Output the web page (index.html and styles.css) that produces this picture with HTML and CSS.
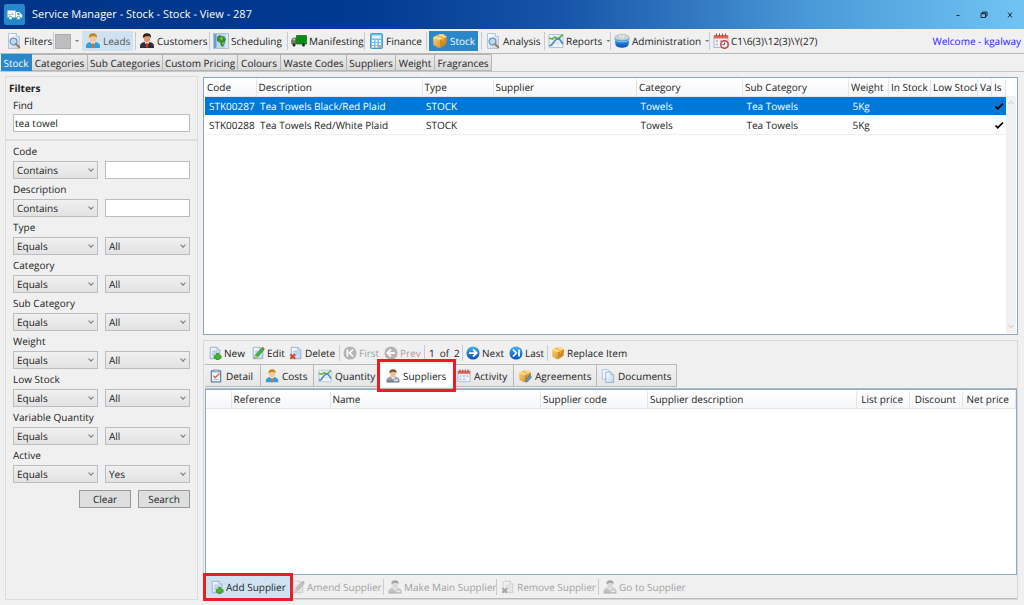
FILE: index.html
```
<!DOCTYPE html>
<html lang="en">
<head>
<meta charset="utf-8">
<title>Service Manager - Stock - Stock - View - 287</title>
<link rel="stylesheet" href="styles.css">
</head>
<body>
<svg class="sprite" aria-hidden="true">
  <defs>
    <linearGradient id="g-paper" x1="0" y1="0" x2="1" y2="1"><stop offset="0" stop-color="#fff"/><stop offset="1" stop-color="#bcd3ee"/></linearGradient>
    <linearGradient id="g-gold" x1="0" y1="0" x2="1" y2="1"><stop offset="0" stop-color="#ffdf86"/><stop offset="1" stop-color="#c97f18"/></linearGradient>
    <linearGradient id="g-blue" x1="0" y1="0" x2="0" y2="1"><stop offset="0" stop-color="#3fb2f5"/><stop offset="1" stop-color="#0a50b8"/></linearGradient>
    <linearGradient id="g-steel" x1="0" y1="0" x2="0" y2="1"><stop offset="0" stop-color="#b4b9c6"/><stop offset="1" stop-color="#70788b"/></linearGradient>
    <symbol id="i-paper" viewBox="0 0 16 16"><path d="M2.500 1.500h8l3 3v10h-11z" fill="url(#g-paper)" stroke="#93a9c9"/><path d="M10.500 1.500v3h3" fill="#fff" stroke="#93a9c9"/><path d="M4.500 6h6M4.500 8h7M4.500 10h5" stroke="#a7bdd9"/></symbol>
    <symbol id="i-search" viewBox="0 0 16 16"><path d="M2.500.5h8l3 3v12h-11z" fill="url(#g-paper)" stroke="#b7c4d8"/><path d="M10.500.5v3h3" fill="#fff" stroke="#b7c4d8"/><circle cx="7.500" cy="8.500" r="3.400" fill="#b5dcf7" stroke="#7694b7" stroke-width="1.300"/><path d="M10 11l3.300 3.300" stroke="#a47b62" stroke-width="2" stroke-linecap="round"/></symbol>
    <symbol id="i-add" viewBox="0 0 16 16"><use href="#i-paper"/><path d="M9.500 8.500h3v2.500h2.500v3h-2.500v2h-3v-2H7v-3h2.500z" fill="#3fbe22" stroke="#23800f" stroke-width=".7"/></symbol>
    <symbol id="i-edit" viewBox="0 0 16 16"><use href="#i-paper"/><path d="M5 10.500L12.500 2l2.500 2-7.500 8.500L4 14z" fill="#47b83a" stroke="#287d27" stroke-width=".8"/><path d="M12.500 2l1-1 2 1.700-.8 1.300z" fill="#dc4938"/><path d="M5 10.500l2.500 2L4 14z" fill="#f2ca8a"/></symbol>
    <symbol id="i-delete" viewBox="0 0 16 16"><use href="#i-paper"/><path d="M1.500 9.500l5.500 5M7 9.500l-5.500 5" stroke="#df4027" stroke-width="2.300"/></symbol>
    <symbol id="i-lead" viewBox="0 0 16 16"><path d="M1 15v-2.200c0-2 2-3.300 4.300-3.800h5.400c2.300.5 4.300 1.800 4.300 3.800V15z" fill="#319fdf"/><path d="M5.500 9l2.500 3.300L10.500 9z" fill="#fff"/><path d="M7.300 10h1.400l.7 4L8 15.500 6.600 14z" fill="#e36a20"/><ellipse cx="8" cy="5.500" rx="3.300" ry="4" fill="#f6c693"/><path d="M4 5C3.700 1.700 5.500.3 8.200.3 11 .3 12.300 2 12 5L10.500 3.500 7 3.300 5 4.200z" fill="#c8851d"/></symbol>
    <symbol id="i-customer" viewBox="0 0 16 16"><path d="M1 15v-2.200c0-2 2-3.300 4.300-3.800h5.400c2.300.5 4.300 1.800 4.300 3.800V15z" fill="#2c3138"/><path d="M5.500 9L8 13l2.500-4z" fill="#fff"/><path d="M7.300 10h1.400l.6 3.500L8 15l-1.300-1.500z" fill="#d9302a"/><ellipse cx="8" cy="5.500" rx="3.200" ry="4" fill="#d99a76"/><path d="M4 5C3.500 1.700 5.300.3 8.200.3 11 .3 12.500 2 12 5L10.500 3.300 7 3.200 5 4.200z" fill="#33221d"/></symbol>
    <symbol id="i-supplier" viewBox="0 0 16 16"><path d="M1 15v-2.200c0-2 2-3.300 4.300-3.800h5.400c2.300.5 4.300 1.800 4.300 3.800V15z" fill="url(#g-steel)" stroke="#626b7a" stroke-width=".6"/><path d="M5.500 9L8 12l2.500-3z" fill="#e9edf4"/><path d="M9 12h5v2H9z" fill="#dce4ed"/><ellipse cx="8" cy="5.500" rx="3.200" ry="4" fill="#edbd96"/><path d="M4 5C3.500 1.700 5.300.3 8.200.3 11 .3 12.500 2 12 5L10.500 3.300 7 3.200 5 4.200z" fill="#795134"/></symbol>
    <symbol id="i-map" viewBox="0 0 16 16"><rect x=".5" y=".5" width="15" height="15" fill="#b9d8f3" stroke="#adc0d6"/><path d="M1 1h2.500v14H1z" fill="#679ed7"/><path d="M12.500 1h2.500v14h-2.500z" fill="#d9e9f8"/><path d="M4 4l2.500-2 2 1 3 .5 1.500 3-1 2.500-.6 2-1.400 3-2-1-1-3.500L4 8z" fill="#3e8f2e"/><path d="M8 4l2 1-1 2-2-1zM10 9l1 1-1 2-1-1z" fill="#a3c63d"/></symbol>
    <symbol id="i-truck" viewBox="0 0 16 16"><path d="M5.500 2.500h10v8.500h-10z" fill="#068d13" stroke="#056b0e" stroke-width=".7"/><path d="M.7 11V7.300L2 5h3v6z" fill="#5e8c54" stroke="#444" stroke-width=".6"/><path d="M1.500 7.300L2.500 5.600h1.700v1.700z" fill="#e9b6a9"/><circle cx="3" cy="12" r="1.500" fill="#262626"/><circle cx="12.500" cy="12" r="1.500" fill="#262626"/></symbol>
    <symbol id="i-calc" viewBox="0 0 16 16"><rect x="2.500" y=".5" width="12" height="15" rx="1" fill="#72bdeb" stroke="#459bd3"/><path d="M4 2.500h9v3H4z" fill="#dff5ff"/><path d="M4 7h2v2H4zM7.500 7h2v2h-2zM11 7h2v2h-2zM4 10h2v2H4zM7.500 10h2v2h-2zM11 10h2v2h-2zM4 13h2v1.500H4zM7.500 13h2v1.500h-2z" fill="#fff"/><path d="M11 13h2v1.500h-2z" fill="#e9a92e"/></symbol>
    <symbol id="i-box" viewBox="0 0 16 16"><path d="M1 4.500L7 1.500 11 1l4 3-1 7-6 4-2.500-.5L1.500 12z" fill="url(#g-gold)"/><path d="M1 4.500l6.500 2.500L15 4 11 1 7 1.500z" fill="#ffdb8a"/><path d="M8 7l7-3-1 7-6 4z" fill="#cf8a24"/><path d="M4 3l6.500 2.500v3l1.300-.8V5L6 2z" fill="#f0b048"/></symbol>
    <symbol id="i-chart" viewBox="0 0 16 16"><path d="M1 1.500h14v13H1z" fill="#f1f7fd" stroke="#b5c6da"/><path d="M1 6h14M1 10h14M5 1.500v13M10 1.500v13" stroke="#c9d8e8" stroke-width=".7"/><path d="M1 5l3.500 1L7 4l3 2 5-4.500" fill="none" stroke="#63b944" stroke-width="1.800"/><path d="M1 12.500h2L8.500 6l2.500-.5L15 11" fill="none" stroke="#4a86c2" stroke-width="1.600"/></symbol>
    <symbol id="i-drum" viewBox="0 0 16 16"><path d="M.5 4.500l1 7.500c1.500 3.500 11.500 3.500 13 0l1-7.500z" fill="url(#g-blue)"/><ellipse cx="8" cy="4.500" rx="7.500" ry="2.800" fill="#d4d9df" stroke="#a5adb5" stroke-width=".7"/><path d="M3 4.500L4 2l3-1 5 .5 1.500 3L8 6.500z" fill="#eceae6" stroke="#b4b2ab" stroke-width=".6"/><path d="M5 2v3M8 1.500v4M11 2v3" stroke="#b9b4a7" stroke-width=".7"/><path d="M1 7c3 2.500 11 2.500 14 0" fill="none" stroke="#7fcdfb"/></symbol>
    <symbol id="i-calendar" viewBox="0 0 16 16"><path d="M1 2.500h14v12H1z" fill="#edf2fb" stroke="#a9b5d1"/><path d="M1 2h14v3.500H1z" fill="#df6853"/><path d="M3.500.5v3M6.500.5v3M9.500.5v3M12.500.5v3" stroke="#92504c"/><path d="M3 7h2v2H3zM7 7h2v2H7zM11 7h2v2h-2zM3 10.500h2v2H3zM7 10.500h2v2H7z" fill="#b5bed6"/></symbol>
    <symbol id="i-calclock" viewBox="0 0 16 16"><use href="#i-calendar"/><circle cx="11.500" cy="11.500" r="3.700" fill="#eef3fb" stroke="#c8433d" stroke-width="1.500"/><path d="M11.500 9.500v2h-2" fill="none" stroke="#8b4c4c"/></symbol>
    <symbol id="i-clip" viewBox="0 0 16 16"><rect x="2" y="1.500" width="12" height="14" rx="1" fill="#5b83ad"/><path d="M3.500 3h9v11h-9z" fill="#f8fbff"/><path d="M5 1h6v2.500H5z" fill="#bdc7d2" stroke="#66788c" stroke-width=".6"/><path d="M5 7.500l2 2.500 5-5" fill="none" stroke="#ed5239" stroke-width="1.600"/><path d="M5 12h6" stroke="#a1b5ca"/></symbol>
    <symbol id="i-agree" viewBox="0 0 16 16"><use href="#i-box"/><path d="M13.500 7l2 2-4 5-2.500 1 .3-2.500z" fill="#6a96c3" stroke="#466887" stroke-width=".6"/></symbol>
    <symbol id="i-docs" viewBox="0 0 16 16"><path d="M1.500.5h6l2 2v9h-8z" fill="#eef5fc" stroke="#a8bdd5"/><path d="M5.500 3.500h6l3 3v9h-9z" fill="url(#g-paper)" stroke="#91abc8"/><path d="M11.500 3.500v3h3" fill="#fff" stroke="#91abc8"/></symbol>
    <symbol id="i-first" viewBox="0 0 16 16"><circle cx="8" cy="8" r="7.500" fill="#b4b4b4"/><path d="M5 4v8M11.500 4L7.500 8l4 4" fill="none" stroke="#fff" stroke-width="2"/></symbol>
    <symbol id="i-prev" viewBox="0 0 16 16"><circle cx="8" cy="8" r="7.500" fill="#b4b4b4"/><path d="M8 3.800L3.800 8 8 12.200M4 8h8.500" fill="none" stroke="#fff" stroke-width="2"/></symbol>
    <symbol id="i-next" viewBox="0 0 16 16"><circle cx="8" cy="8" r="7.500" fill="url(#g-blue)"/><path d="M8 3.800L12.200 8 8 12.200M12 8H3.500" fill="none" stroke="#fff" stroke-width="2"/></symbol>
    <symbol id="i-last" viewBox="0 0 16 16"><circle cx="8" cy="8" r="7.500" fill="url(#g-blue)"/><path d="M11.500 4v8M4.500 4l4 4-4 4" fill="none" stroke="#fff" stroke-width="2"/></symbol>
    <symbol id="i-tick" viewBox="0 0 10 10"><path d="M1.500 5.500l2.300 2.200L9 2.500" fill="none" stroke="currentColor" stroke-width="1.700"/></symbol>
  </defs>
</svg>

<div class="app">
  <header class="titlebar">
    <svg class="logo" viewBox="0 0 21 21"><rect width="21" height="21" rx="2.500" fill="#2687c8"/><path d="M3.500 6.500h8v7h-8z" fill="#fff"/><path d="M12 8h3.200l3 3v2.500H12z" fill="#fff"/><path d="M13.300 9h1.500l1.500 1.800h-3z" fill="#2687c8"/><circle cx="6.500" cy="14" r="1.800" fill="#fff" stroke="#2687c8" stroke-width=".7"/><circle cx="14.500" cy="14" r="1.800" fill="#fff" stroke="#2687c8" stroke-width=".7"/><path d="M4.500 10.500h5M7 8l2.500 2.500" stroke="#9cc9e8"/></svg>
    <h1>Service Manager - Stock - Stock - View - 287</h1>
    <div class="window-buttons">
      <button type="button" aria-label="Minimise"><svg viewBox="0 0 8 8"><path d="M2.500 4.500h3" stroke="#1c2c3c"/></svg></button>
      <button type="button" aria-label="Restore"><svg viewBox="0 0 8 8"><path d="M2.500 2V1H7v4H6M1 2.500h4.500v4H1z" fill="none" stroke="#1c2c3c"/><path d="M1 2.500h5" stroke="#1c2c3c" stroke-width="1.300"/></svg></button>
      <button type="button" aria-label="Close"><svg viewBox="0 0 8 8"><path d="M2 1.500l4 5M6 1.500l-4 5" stroke="#1c2c3c"/></svg></button>
    </div>
  </header>

  <nav class="ribbon">
    <div class="cell"><button type="button"><svg class="icon"><use href="#i-search"/></svg>Filters</button></div>
    <div class="cell plain"><button type="button" aria-label="Colour"><span class="swatch"></span><i class="caret"></i></button></div>
    <div class="cell"><button type="button" class="hover"><svg class="icon"><use href="#i-lead"/></svg>Leads</button></div>
    <div class="cell"><button type="button"><svg class="icon"><use href="#i-customer"/></svg>Customers</button></div>
    <div class="cell"><button type="button"><svg class="icon"><use href="#i-map"/></svg>Scheduling</button></div>
    <div class="cell"><button type="button"><svg class="icon"><use href="#i-truck"/></svg>Manifesting</button></div>
    <div class="cell"><button type="button"><svg class="icon"><use href="#i-calc"/></svg>Finance</button></div>
    <div class="cell"><button type="button" class="current"><svg class="icon"><use href="#i-box"/></svg>Stock</button></div>
    <div class="cell"><button type="button"><svg class="icon"><use href="#i-search"/></svg>Analysis</button></div>
    <div class="cell"><button type="button"><svg class="icon"><use href="#i-chart"/></svg>Reports<i class="caret"></i></button></div>
    <div class="cell"><button type="button"><svg class="icon"><use href="#i-drum"/></svg>Administration<i class="caret"></i></button></div>
    <div class="cell plain"><button type="button"><svg class="icon"><use href="#i-calclock"/></svg>C1\6(3)\12(3)\Y(27)</button></div>
    <a class="welcome" href="#">Welcome - kgalway</a>
  </nav>

  <nav class="subtabs">
    <button type="button" class="current">Stock</button>
    <button type="button">Categories</button>
    <button type="button">Sub Categories</button>
    <button type="button">Custom Pricing</button>
    <button type="button">Colours</button>
    <button type="button">Waste Codes</button>
    <button type="button">Suppliers</button>
    <button type="button">Weight</button>
    <button type="button">Fragrances</button>
  </nav>

  <main class="workspace">
    <form class="filters">
      <div class="find">
        <h2>Filters</h2>
        <label for="find">Find</label>
        <input id="find" type="text" value="tea towel">
      </div>
      <div class="criteria">
        <label for="code">Code</label>
        <span class="drop"><select aria-label="Code match"><option>Contains</option></select></span><input id="code" type="text">
        <label for="desc">Description</label>
        <span class="drop"><select aria-label="Description match"><option>Contains</option></select></span><input id="desc" type="text">
        <label for="type">Type</label>
        <span class="drop"><select aria-label="Type match"><option>Equals</option></select></span><span class="drop"><select id="type"><option>All</option></select></span>
        <label for="category">Category</label>
        <span class="drop"><select aria-label="Category match"><option>Equals</option></select></span><span class="drop"><select id="category"><option>All</option></select></span>
        <label for="subcategory">Sub Category</label>
        <span class="drop"><select aria-label="Sub Category match"><option>Equals</option></select></span><span class="drop"><select id="subcategory"><option>All</option></select></span>
        <label for="weight">Weight</label>
        <span class="drop"><select aria-label="Weight match"><option>Equals</option></select></span><span class="drop"><select id="weight"><option>All</option></select></span>
        <label for="low">Low Stock</label>
        <span class="drop"><select aria-label="Low Stock match"><option>Equals</option></select></span><span class="drop"><select id="low"><option>All</option></select></span>
        <label for="variable">Variable Quantity</label>
        <span class="drop"><select aria-label="Variable Quantity match"><option>Equals</option></select></span><span class="drop"><select id="variable"><option>All</option></select></span>
        <label for="active">Active</label>
        <span class="drop"><select aria-label="Active match"><option>Equals</option></select></span><span class="drop"><select id="active"><option>Yes</option></select></span>
      </div>
      <div class="form-buttons"><button type="button">Clear</button><button type="button">Search</button></div>
    </form>

    <div class="content">
      <section class="listing">
        <table class="stock">
          <colgroup><col class="w-code"><col class="w-desc"><col class="w-type"><col><col class="w-cat"><col class="w-cat"><col class="w-weight"><col class="w-in"><col class="w-low"><col class="w-tiny"><col class="w-tiny"></colgroup>
          <thead><tr><th>Code</th><th>Description</th><th>Type</th><th>Supplier</th><th>Category</th><th>Sub Category</th><th>Weight</th><th>In Stock</th><th>Low Stock</th><th>Va</th><th>Is</th></tr></thead>
          <tbody>
            <tr class="selected"><td>STK00287</td><td>Tea Towels Black/Red Plaid</td><td>STOCK</td><td></td><td>Towels</td><td>Tea Towels</td><td>5Kg</td><td></td><td></td><td></td><td><svg class="tick"><use href="#i-tick"/></svg></td></tr>
            <tr><td>STK00288</td><td>Tea Towels Red/White Plaid</td><td>STOCK</td><td></td><td>Towels</td><td>Tea Towels</td><td>5Kg</td><td></td><td></td><td></td><td><svg class="tick"><use href="#i-tick"/></svg></td></tr>
          </tbody>
        </table>
        <div class="scrollbar"><svg viewBox="0 0 8 8"><path d="M1.500 5L4 2.500 6.500 5" fill="none" stroke="#c3c3c3"/></svg><svg viewBox="0 0 8 8"><path d="M1.500 3L4 5.500 6.500 3" fill="none" stroke="#c3c3c3"/></svg></div>
      </section>

      <section class="detail">
        <div class="record-bar">
          <div class="cell plain"><button type="button"><svg class="icon"><use href="#i-add"/></svg>New</button></div>
          <div class="cell plain"><button type="button"><svg class="icon"><use href="#i-edit"/></svg>Edit</button></div>
          <div class="cell"><button type="button"><svg class="icon"><use href="#i-delete"/></svg>Delete</button></div>
          <div class="cell plain"><button type="button" disabled><svg class="icon"><use href="#i-first"/></svg>First</button></div>
          <div class="cell"><button type="button" disabled><svg class="icon"><use href="#i-prev"/></svg>Prev</button></div>
          <div class="cell position"><span>1</span><span>of</span><span>2</span></div>
          <div class="cell plain"><button type="button"><svg class="icon"><use href="#i-next"/></svg>Next</button></div>
          <div class="cell"><button type="button"><svg class="icon"><use href="#i-last"/></svg>Last</button></div>
          <div class="cell plain"><button type="button"><svg class="icon"><use href="#i-box"/></svg>Replace Item</button></div>
        </div>
        <div class="detail-tabs">
          <button type="button"><svg class="icon"><use href="#i-clip"/></svg>Detail</button>
          <button type="button"><svg class="icon"><use href="#i-lead"/></svg>Costs</button>
          <button type="button"><svg class="icon"><use href="#i-chart"/></svg>Quantity</button>
          <button type="button" class="active"><svg class="icon"><use href="#i-supplier"/></svg>Suppliers</button>
          <button type="button"><svg class="icon"><use href="#i-calendar"/></svg>Activity</button>
          <button type="button"><svg class="icon"><use href="#i-agree"/></svg>Agreements</button>
          <button type="button"><svg class="icon"><use href="#i-docs"/></svg>Documents</button>
        </div>
        <div class="supplier-list">
          <table class="suppliers">
            <colgroup><col class="w-mark"><col class="w-ref"><col><col class="w-scode"><col class="w-sdesc"><col class="w-price"><col class="w-price"><col class="w-price"></colgroup>
            <thead><tr><th></th><th>Reference</th><th>Name</th><th>Supplier code</th><th>Supplier description</th><th class="num">List price</th><th class="num">Discount</th><th class="num">Net price</th></tr></thead>
          </table>
        </div>
        <div class="action-bar">
          <div class="cell marked"><button type="button"><svg class="icon"><use href="#i-add"/></svg>Add Supplier</button></div>
          <div class="cell"><button type="button" disabled><svg class="icon"><use href="#i-edit"/></svg>Amend Supplier</button></div>
          <div class="cell"><button type="button" disabled><svg class="icon"><use href="#i-supplier"/></svg>Make Main Supplier</button></div>
          <div class="cell"><button type="button" disabled><svg class="icon"><use href="#i-delete"/></svg>Remove Supplier</button></div>
          <div class="cell plain"><button type="button" disabled><svg class="icon"><use href="#i-supplier"/></svg>Go to Supplier</button></div>
        </div>
      </section>
    </div>
  </main>
</div>
</body>
</html>
```
FILE: styles.css
```
* { box-sizing: border-box; }
body { margin: 0; background: #f0f0f0; color: #222; font: 10px/14px "Open Sans", "Noto Sans", sans-serif; text-rendering: geometricPrecision; }
button, input, select { font: inherit; color: inherit; margin: 0; text-rendering: inherit; }
button { background: none; border: 0; padding: 0; white-space: nowrap; }
h1, h2 { margin: 0; }
.sprite { position: absolute; width: 0; height: 0; }
.app { min-height: 100vh; display: flex; flex-direction: column; }

.titlebar { height: 29px; display: flex; align-items: center; gap: 7px; padding: 0 4px; background: linear-gradient(90deg, #003488 0%, #003a91 35%, #1755a8 55%, #4c9bd9 80%, #70c4f3 100%); }
.logo { width: 21px; height: 21px; }
.titlebar h1 { flex: 1; color: #fff; font-size: 11px; font-weight: 400; line-height: 16px; }
.window-buttons { display: flex; gap: 18px; padding-right: 6px; }
.window-buttons svg { display: block; width: 8px; height: 8px; }

.cell { display: flex; align-items: center; border-right: 1px solid #c5cbd4; }
.cell.plain { border-right-color: transparent; }
.cell button { display: flex; align-items: center; }
.icon { flex: none; width: 16px; height: 16px; }
.caret { flex: none; width: 4px; height: 2px; background: #777; clip-path: polygon(0 0, 100% 0, 50% 100%); margin-left: 2px; }

.ribbon { height: 25px; display: grid; grid-template-columns: 54px 27px 55px 74px 78px 77px 62px 55px 63px 66px 99px 1fr auto; align-items: center; padding-right: 3px; border-bottom: 1px solid #b9b9b9; }
.ribbon .cell { height: 18px; padding-left: 3px; }
.ribbon .cell:first-child { padding-left: 6px; }
.ribbon .cell:nth-child(2) { padding-left: 1px; }
.ribbon .cell:nth-child(3) { padding-left: 1px; }
.ribbon button { height: 20px; gap: 2px; }
.ribbon .hover { padding: 0 3px; background: #cfe2f2; color: #555; }
.ribbon .current { margin-left: -1px; padding: 0 3px; background: #2987ca; color: #fff; }
.swatch { flex: none; width: 16px; height: 15px; background: #bdbdbd; border: 1px solid #adadad; }
.welcome { color: #2a25f5; text-decoration: none; }

.subtabs { height: 18px; display: grid; grid-template-columns: 31px 56px 75px 75px 43px 66px 49px 39px 57px; padding-left: 1px; border-bottom: 1px solid #c6c6c6; }
.subtabs button { background: linear-gradient(#ebebeb, #d9d9d9); border: 1px solid #b4b4b4; border-left-width: 0; }
.subtabs .current { background: #2987ca; border-color: #2987ca; color: #fff; }

.workspace { flex: 1; display: grid; grid-template-columns: 193px 1fr; gap: 5px; padding: 4px 6px 5px 5px; }
.filters { border: 1px solid #dcdcdc; }
.find { display: flex; flex-direction: column; padding: 4px 7px 7px; border-bottom: 2px solid #dedede; }
.find h2 { margin-left: -4px; font-size: 10px; line-height: 15px; }
.find label { line-height: 18px; }
.filters input, .filters select { width: 100%; height: 18px; border: 1px solid #b9bec4; border-radius: 0; padding: 0 3px; outline: 0; }
.filters input { background: #fff; padding: 0 1px; }
.criteria { display: grid; grid-template-columns: 1fr 1fr; column-gap: 7px; padding: 0 7px; }
.criteria label { grid-column: 1 / -1; line-height: 20px; }
.drop { display: block; height: 18px; position: relative; }
.filters select { display: block; appearance: none; background: linear-gradient(#f0f0f0, #e2e2e2); }
.drop::after { content: ""; position: absolute; right: 5px; top: 6px; width: 3px; height: 3px; border: solid #777; border-width: 0 1px 1px 0; transform: rotate(45deg); }
.form-buttons { display: flex; justify-content: flex-end; gap: 7px; padding: 7px; }
.form-buttons button { width: 52px; height: 18px; border: 1px solid #999; background: #dddfde; }

.content { min-width: 0; display: grid; grid-template-rows: 258px 1fr; gap: 5px; padding-top: 1px; }
.listing { display: flex; align-items: flex-start; border: 1px solid #8ba5c3; background: #fff; padding: 1px; }
table { width: 100%; border-collapse: collapse; table-layout: fixed; }
th, td { padding: 0 0 0 2px; font-weight: 400; text-align: left; white-space: nowrap; overflow: hidden; }
th { height: 17px; border-right: 1px solid #e2e5e9; border-bottom: 1px solid #e2e5e9; background: linear-gradient(#fff, #f5f6f8); }
td { height: 19px; border-bottom: 1px solid #f0f0f0; padding-left: 4px; }
td:last-child { padding-left: 2px; color: #000; }
.stock .selected { background: #0078d7; color: #fff; }
.w-code { width: 51px; } .w-desc { width: 166px; } .w-type { width: 71px; } .w-cat { width: 106px; }
.w-weight { width: 40px; } .w-in { width: 42px; } .w-low { width: 47px; } .w-tiny { width: 14px; }
.tick { display: block; width: 10px; height: 10px; }
.scrollbar { flex: none; align-self: stretch; width: 10px; margin-top: 17px; padding: 3px 1px; display: flex; flex-direction: column; justify-content: space-between; background: #f1f1f1; }
.scrollbar svg { width: 8px; height: 8px; }

.detail { display: grid; grid-template-rows: 23px 25px 1fr 24px; border: 1px solid #d7d7d7; padding-left: 1px; }
.record-bar { display: grid; grid-template-columns: 43px 38px 54px 41px 44px 38px 43px 42px 1fr; align-items: center; }
.record-bar .cell { height: 16px; padding-left: 3px; }
.record-bar button, .action-bar button { gap: 2px; }
.record-bar .icon, .action-bar .icon, .detail-tabs .icon { width: 14px; height: 14px; }
button:disabled { color: #a2a2a2; }
.record-bar .position { gap: 5px; padding-left: 4px; }

.detail-tabs { display: grid; grid-template-columns: 56px 53px 66px 73px 61px 83px 80px; border-bottom: 1px solid #b9b9b9; padding-bottom: 1px; }
.detail-tabs button { display: flex; align-items: center; gap: 3px; padding-left: 4px; border: 1px solid #b8b8b8; border-left-width: 0; background: linear-gradient(#f1f1f1, #e6e6e6); }
.detail-tabs .active { position: relative; padding-left: 6px; border: 0; background: #fff; }
.detail-tabs .active::after { content: ""; position: absolute; inset: -5px -3px; border: 3px solid #ed1c24; }
.supplier-list { border: 1px solid #8ba9cf; background: #fff; padding-top: 1px; }
.w-mark { width: 25px; } .w-ref { width: 99px; } .w-scode { width: 107px; } .w-sdesc { width: 209px; } .w-price { width: 53px; }
.suppliers .num { padding: 0 6px 0 0; text-align: right; }

.action-bar { display: grid; grid-template-columns: 84px 94px 113px 102px 1fr; align-items: center; padding-left: 1px; border-bottom: 1px solid #b9b9b9; }
.action-bar .cell { height: 16px; padding-left: 4px; }
.action-bar .cell:nth-child(2) { padding-left: 1px; }
.action-bar .marked { position: relative; height: 22px; background: #cfe2f2; border: 0; }
.marked::after { content: ""; position: absolute; inset: -3px; border: 3px solid #ed1c24; }
.action-bar button:disabled .icon { filter: grayscale(1); opacity: .5; }
```
